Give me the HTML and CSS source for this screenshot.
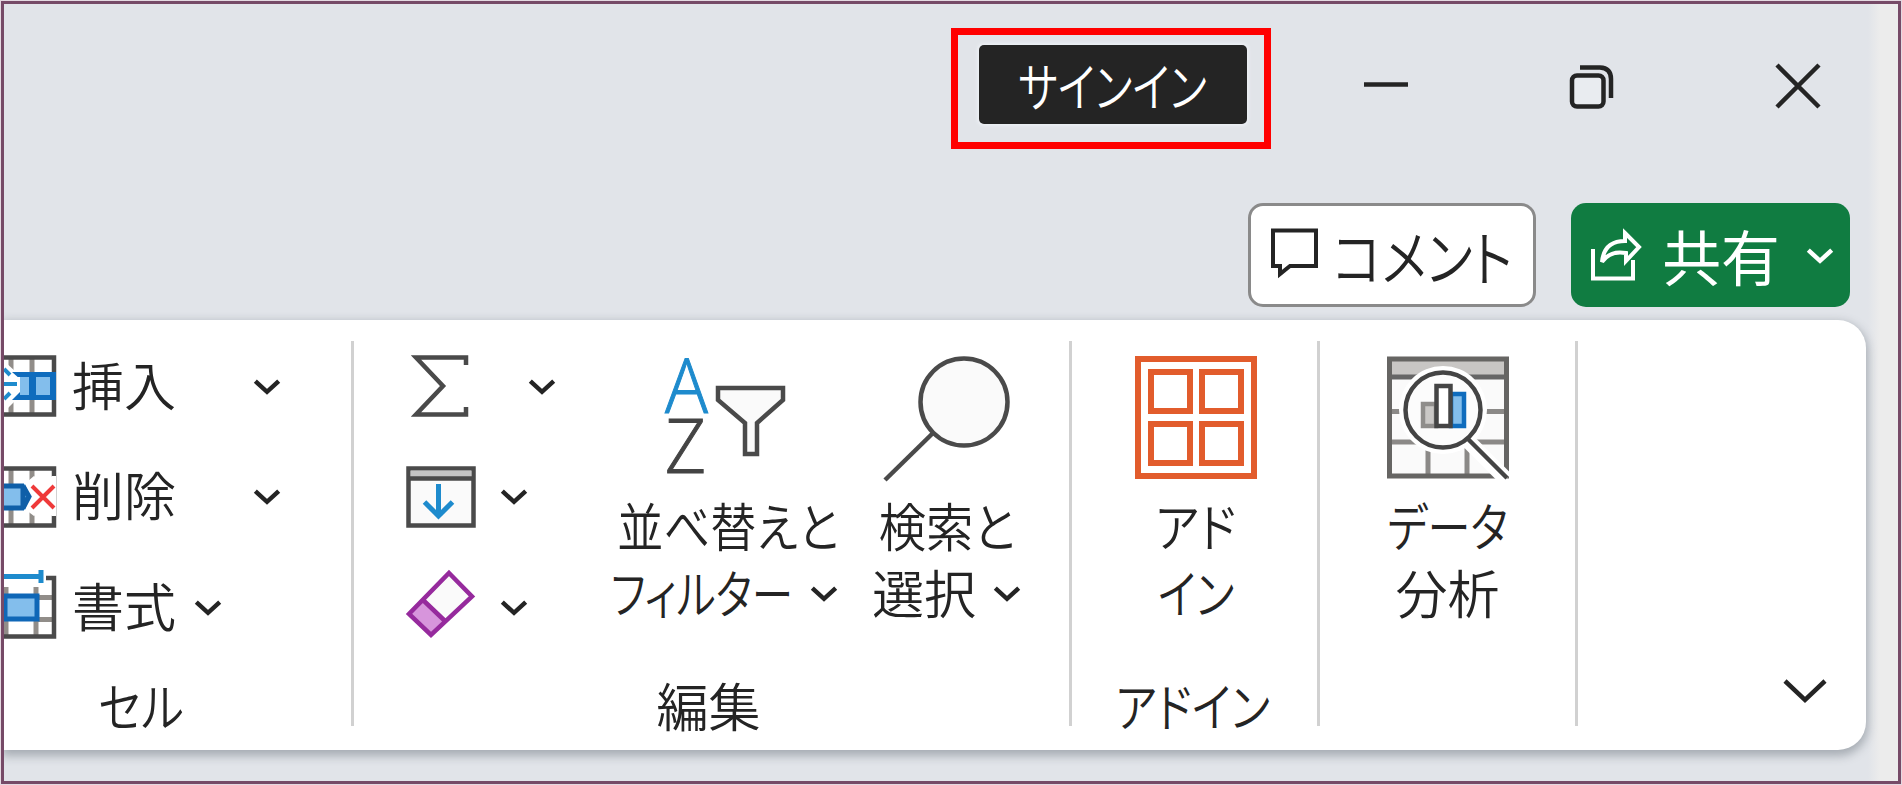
FILE: index.html
```html
<!DOCTYPE html>
<html lang="ja">
  <head>
    <meta charset="UTF-8" />
    <meta name="viewport" content="width=device-width, initial-scale=1.0" />
    <title>Excel</title>
    <link rel="stylesheet" href="styles.css">
  </head>
  <body>
    <!-- shared chevrons -->
    <svg class="defs" width="0" height="0">
      <symbol id="chevron" viewBox="0 0 26 16">
        <path d="M2 3 L13 13 L24 3" fill="none" stroke="currentColor" stroke-width="4.2" />
      </symbol>
    </svg>

    <main class="frame">
      <div class="window">
        <header class="title-bar">
          <div class="highlight">
            <button class="sign-in"><span class="text t-signin">サインイン</span></button>
          </div>
          <nav class="window-controls">
            <svg class="control" width="46" height="46" viewBox="0 0 46 46">
              <path d="M1 21.5H45" />
            </svg>
            <svg class="control" width="46" height="46" viewBox="0 0 46 46">
              <rect x="3" y="12.5" width="31.500" height="31" rx="5" fill="#e9ecf0" />
              <path d="M11 4.500H31Q42 5 42 16V35" />
            </svg>
            <svg class="control" width="46" height="46" viewBox="0 0 46 46">
              <path d="M2 2L44 44M44 2L2 44" />
            </svg>
          </nav>
        </header>

        <div class="actions">
          <button class="action comment">
            <svg width="50" height="50" viewBox="0 0 50 50">
              <path d="M5 3.500H48V39H22L12 47V39H5Z" />
            </svg>
            <span class="text t-comment">コメント</span>
          </button>
          <button class="action share">
            <svg width="52" height="54" viewBox="0 0 52 54">
              <path d="M3 21V50.500H43V32" />
              <path d="M35 5L49 19L36 33V25Q20 22 12 34Q14 13 35 13Z" />
            </svg>
            <span class="text t-share">共有</span>
            <svg class="chevron" width="28" height="20"><use href="#chevron" /></svg>
          </button>
        </div>

        <section class="ribbon">
          <div class="group cells">
            <div class="rows">
              <div class="row">
                <svg width="52" height="62" viewBox="0 0 52 62">
                  <path class="grid-line" d="M7 2V60M28 2V60" />
                  <path class="frame-line" d="M0 2.500H50V59.500H0" />
                  <path d="M0 6L12 17V45L0 57Z" fill="#fff" />
                  <path d="M8 17H52V45H8L16 37V24Z" fill="#0f6cbd" />
                  <path d="M16 22H25V40H16ZM32 22H46V40H32Z" fill="#83beec" />
                  <path d="M0 22H16V36L6 44H0Z" fill="#fff" />
                  <path d="M0 29H13M0 14L6 20M0 44L6 38" fill="none" stroke="#1e8bcd" stroke-width="4" />
                </svg>
                <span class="text label">挿入</span>
                <svg class="chevron"><use href="#chevron" /></svg>
              </div>
              <div class="row">
                <svg width="52" height="62" viewBox="0 0 52 62">
                  <path class="grid-line" d="M7 2V60M28 2V60" />
                  <path class="frame-line" d="M0 2.500H50V59.500H0" />
                  <path d="M24 15L30 10L39 17L48 10H52V50H48L39 44L30 50L22 44Z" fill="#fff" />
                  <path d="M0 18H21L26 30L21 44H0Z" fill="#83beec" />
                  <path d="M0 20H20M0 42H20M19 20V42L25 30.500L19 20" fill="none" stroke="#0f5fa8" stroke-width="5" />
                  <path d="M28 20L50 42M50 20L28 42" stroke="#ef3a3a" stroke-width="4" />
                </svg>
                <span class="text label">削除</span>
                <svg class="chevron"><use href="#chevron" /></svg>
              </div>
              <div class="row">
                <svg class="format-icon" width="52" height="70" viewBox="0 0 52 70">
                  <path class="grid-line" d="M2 18V67M32 18V67M32 28.500H50M32 50.500H50" />
                  <path class="frame-line" d="M42 9H50V67.500H0" />
                  <rect x="1" y="27" width="32" height="23" fill="#83beec" stroke="#0f67b7" stroke-width="5" />
                  <path d="M0 7.500H36M37 1V14" stroke="#1e8bcd" stroke-width="5" />
                </svg>
                <span class="text label">書式</span>
                <svg class="chevron near"><use href="#chevron" /></svg>
              </div>
            </div>
            <div class="group-name"><span class="text t-cell">セル</span></div>
          </div>

          <div class="group editing">
            <div class="tools">
              <div class="rows">
                <div class="row">
                  <svg width="70" height="62" viewBox="0 0 70 62">
                    <path class="dark-line" d="M60 10V2.500H10L37 31L10 59.500H60V52" />
                  </svg>
                  <svg class="chevron far"><use href="#chevron" /></svg>
                </div>
                <div class="row">
                  <svg width="70" height="62" viewBox="0 0 70 62">
                    <rect class="dark-line" x="2.500" y="2.500" width="65" height="57" />
                    <rect x="4.500" y="4.500" width="61" height="7" fill="#c4c4c4" />
                    <path class="dark-line" d="M2 12.500H68" />
                    <path d="M32.500 18V50M18.500 36L32.500 50L46.500 36" fill="none" stroke="#1e8bcd" stroke-width="5" />
                  </svg>
                  <svg class="chevron"><use href="#chevron" /></svg>
                </div>
                <div class="row">
                  <svg class="eraser" width="70" height="70" viewBox="0 0 70 70">
                    <path d="M43 4L66 27.500L38 52L17 31Z" fill="#fafafa" />
                    <path d="M17 31L38 52L25 66L3 45Z" fill="#d795dc" />
                    <path d="M43 4L66 27.500L25 66L3 45ZM17 31L39 52" fill="none" stroke="#962a9d" stroke-width="4.500" />
                  </svg>
                  <svg class="chevron"><use href="#chevron" /></svg>
                </div>
              </div>

              <div class="big-button sort">
                <svg width="130" height="125" viewBox="0 0 130 125">
                  <text class="sort-a" x="2" y="58" textLength="43" lengthAdjust="spacingAndGlyphs">A</text>
                  <text class="sort-z" x="2" y="118" textLength="41" lengthAdjust="spacingAndGlyphs">Z</text>
                  <path class="dark-line" d="M55 33H120V45L94 68V99H82V68L55 45Z" />
                </svg>
                <div class="line"><span class="text t-sort">並べ替えと</span></div>
                <div class="line"><span class="text t-filter">フィルター</span><svg class="chevron"><use href="#chevron" /></svg></div>
              </div>

              <div class="big-button find">
                <svg width="130" height="125" viewBox="0 0 130 125">
                  <circle class="dark-line" cx="82" cy="47" r="43.500" />
                  <path class="dark-line" d="M51 78L3 125" />
                </svg>
                <div class="line"><span class="text t-find">検索と</span></div>
                <div class="line"><span class="text label">選択</span><svg class="chevron"><use href="#chevron" /></svg></div>
              </div>
            </div>
            <div class="group-name"><span class="text label">編集</span></div>
          </div>

          <div class="group addins">
            <div class="big-button">
              <svg width="124" height="125" viewBox="0 0 124 125">
                <g fill="none" stroke="#e25c2c" stroke-width="6">
                  <rect x="4" y="4" width="116" height="117" />
                  <rect x="17" y="17" width="39" height="39" />
                  <rect x="68" y="17" width="39" height="39" />
                  <rect x="17" y="69" width="39" height="39" />
                  <rect x="68" y="69" width="39" height="39" />
                </g>
              </svg>
              <div class="line"><span class="text t-add">アド</span></div>
              <div class="line"><span class="text t-in">イン</span></div>
            </div>
            <div class="group-name"><span class="text t-addin">アドイン</span></div>
          </div>

          <div class="group analysis">
            <div class="big-button">
              <svg width="124" height="125" viewBox="0 0 124 125">
                <rect x="3" y="4" width="118" height="117" fill="#fafafa" />
                <rect x="3" y="4" width="118" height="18" fill="#c8c6c4" />
                <path d="M3 56.500H121M3 87H121M42 87V121M81 87V121" stroke="#8b8987" stroke-width="5" />
                <path d="M3 22H121" stroke="#666" stroke-width="5" />
                <rect x="3.500" y="4" width="117" height="117" fill="none" stroke="#666563" stroke-width="5" />
                <circle cx="57" cy="55" r="44" fill="#fff" />
                <path d="M80 84L120 124" stroke="#fff" stroke-width="15" />
                <circle cx="57" cy="55" r="37.500" fill="#fcfcfc" stroke="#444" stroke-width="4.500" />
                <path d="M81 83L121 123" stroke="#444" stroke-width="4.500" />
                <rect x="37" y="49" width="13" height="22" fill="#cac8c6" stroke="#8f8d8b" stroke-width="4.500" />
                <rect x="65" y="39" width="13" height="32" fill="#83beec" stroke="#0f6cbd" stroke-width="4.500" />
                <rect x="50.500" y="31" width="14" height="40" fill="#fff" stroke="#444" stroke-width="4.500" />
              </svg>
              <div class="line"><span class="text t-data">データ</span></div>
              <div class="line"><span class="text label">分析</span></div>
            </div>
          </div>

          <svg class="collapse" width="44" height="26" viewBox="0 0 44 26">
            <path d="M2 3L22 22L42 3" fill="none" stroke="#242424" stroke-width="4.500" />
          </svg>
        </section>
      </div>
    </main>
  </body>
</html>
```

FILE: styles.css
```css
*,
*::before,
*::after {
  box-sizing: border-box;
  margin: 0;
  padding: 0;
}

body {
  width: 1902px;
  height: 785px;
  padding: 1px;
  overflow: hidden;
  background: #e4d9e1;
  color: #242424;
  font-family: "Noto Sans CJK JP", sans-serif;
  font-size: 52px;
  font-weight: 350;
}

button {
  border: none;
  color: inherit;
  font: inherit;
}

svg {
  display: block;
  flex: none;
  overflow: visible;
}

.defs {
  position: absolute;
}

.frame {
  width: 1900px;
  height: 783px;
  border: 3px solid #764a67;
  overflow: hidden;
  background: linear-gradient(to right, #e1e4e9 1864px, #ececec 1876px);
}

.window {
  width: 1862px;
}

.text {
  display: inline-block;
  flex: none;
  white-space: nowrap;
  line-height: 1;
  font-feature-settings: "palt";
}

/* kana are set narrower than the kanji */
.t-signin {
  transform: scaleX(0.81);
}

.t-comment {
  transform: scaleX(0.86);
}

.t-cell {
  transform: scaleX(0.87);
}

.t-sort {
  transform: scaleX(0.885);
}

.t-filter {
  transform: scaleX(0.8);
}

.t-find {
  transform: scaleX(0.91);
}

.t-add {
  transform: scaleX(0.9);
}

.t-in,
.t-data {
  transform: scaleX(0.83);
}

.t-addin {
  transform: scaleX(0.85);
}

/* title bar */
.title-bar {
  display: flex;
  justify-content: flex-end;
  padding: 24px 45px 0 0;
}

.highlight {
  display: flex;
  justify-content: center;
  width: 320px;
  height: 121px;
  padding: 10px 0 0 3px;
  border: 7px solid #ff0000;
}

.sign-in {
  width: 268px;
  height: 79px;
  border-radius: 5px;
  background: #242424;
  box-shadow: 0 0 3px 2px #eceff4;
  color: #fff;
}

.window-controls {
  display: flex;
  gap: 160px;
  margin-left: 92px;
  padding-top: 35px;
}

.control {
  fill: none;
  stroke: #242424;
  stroke-width: 4.5;
}

/* comment and share */
.actions {
  display: flex;
  justify-content: flex-end;
  gap: 35px;
  padding: 54px 16px 13px 0;
}

.action {
  display: flex;
  align-items: center;
  height: 104px;
  border-radius: 15px;
  font-size: 60px;
}

.action svg {
  fill: none;
  stroke: currentColor;
  stroke-width: 4;
}

.comment {
  width: 288px;
  padding-left: 17px;
  border: 3px solid #8a8a8a;
  background: #fff;
}

.comment svg {
  margin-top: -6px;
}

.share {
  width: 279px;
  padding-left: 19px;
  background: #107c41;
  color: #fff;
  font-weight: 400;
}

.t-share {
  margin-left: 19px;
  transform: scaleX(0.98);
}

.share .chevron {
  margin-left: 25px;
}

/* ribbon */
.ribbon {
  display: flex;
  height: 430px;
  padding-top: 21px;
  border-radius: 0 28px 28px 0;
  background: #fff;
  box-shadow: 0 4px 10px 2px rgba(80, 90, 100, 0.4);
}

.ribbon .text {
  padding-bottom: 5px;
}

.group {
  display: flex;
  flex-direction: column;
  height: 385px;
  padding-top: 14px;
  border-right: 3px solid #d1d1d1;
}

.cells {
  width: 350px;
}

.editing {
  width: 718px;
}

.addins {
  width: 248px;
}

.analysis {
  width: 258px;
}

.rows {
  display: flex;
  flex-direction: column;
  gap: 48.5px;
}

.row {
  display: flex;
  align-items: center;
  height: 62px;
}

.row .label {
  margin-left: 16px;
}

.chevron {
  width: 28px;
  height: 17px;
}

.row .chevron {
  margin-left: 77px;
}

.row .chevron.near {
  margin-left: 18px;
}

.editing .row .chevron {
  margin-left: 24px;
}

.editing .row .chevron.far {
  margin-left: 52px;
}

.format-icon,
.eraser {
  margin-top: -6px;
}

.dark-line,
.frame-line {
  fill: none;
  stroke: #4a4a4a;
  stroke-width: 4.5;
}

rect.dark-line,
circle.dark-line,
.sort path.dark-line {
  fill: #fafafa;
}

.grid-line {
  fill: none;
  stroke: #918d89;
  stroke-width: 5;
}

.group-name {
  display: flex;
  justify-content: center;
  align-items: center;
  height: 38px;
  margin-top: auto;
}

.cells .group-name {
  padding-right: 72px;
}

.editing .group-name {
  padding-right: 6px;
}

.addins .group-name {
  padding-right: 3px;
}

.tools {
  display: flex;
  padding-left: 52px;
}

.tools .rows {
  width: 209px;
}

.big-button {
  display: flex;
  flex-direction: column;
  align-items: center;
}

.addins .big-button {
  padding-left: 3px;
}

.sort {
  width: 225px;
}

.sort-a,
.sort-z {
  font-family: "Open Sans", sans-serif;
  font-size: 75px;
  font-weight: 300;
  fill: #1e8bcd;
  stroke: #1e8bcd;
}

.sort-z {
  fill: #444;
  stroke: #444;
}

.find {
  width: 149px;
  margin-left: 32px;
}

.line {
  display: flex;
  justify-content: center;
  align-items: center;
  height: 67px;
}

.big-button svg + .line {
  margin-top: 14px;
}

.line .chevron {
  margin-left: 17px;
  margin-top: -2px;
}

.sort .line .chevron {
  margin: -2px 29px 0 -5px;
}

.collapse {
  align-self: flex-end;
  margin: 0 39px 46px auto;
}
```
